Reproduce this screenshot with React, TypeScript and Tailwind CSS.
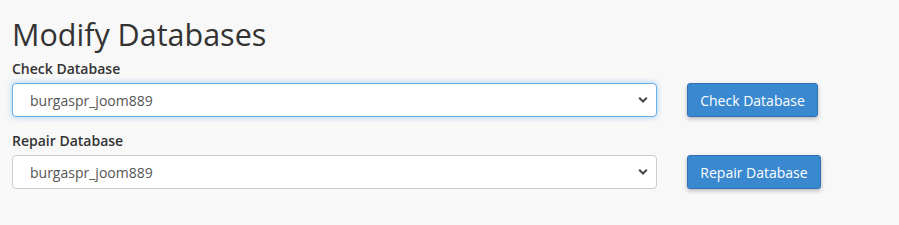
import React from 'react';

const font = { fontFamily: '"Open Sans", "Liberation Sans", sans-serif' };

const Chevron = () => (
    <svg className="pointer-events-none absolute right-[9px] top-1/2 -translate-y-1/2" width="10" height="7" viewBox="0 0 10 7">
        <path d="M1.2 1.3 L5 5 L8.8 1.3" fill="none" stroke="#444" strokeWidth="2" />
    </svg>
);

interface RowProps {
    label: string;
    action: string;
    focused?: boolean;
    btnWidth: string;
}

const DbRow: React.FC<RowProps> = ({ label, action, focused, btnWidth }) => (
    <div className="flex flex-col">
        <label className="text-[14px] leading-[20px] font-semibold text-[#333] mb-[4px]">{label}</label>
        <div className="flex items-center gap-[30px]">
            <div className="relative w-[645px] h-[34px]">
                <select
                    defaultValue="burgaspr_joom889"
                    className={`appearance-none w-full h-full rounded-[4px] bg-white pl-[17px] pr-8 text-[14px] text-[#555] outline-none border ${
                        focused
                            ? 'border-[#66afe9] shadow-[0_0_6px_rgba(102,175,233,0.6)]'
                            : 'border-[#ccc]'
                    }`}
                    style={font}
                >
                    <option>burgaspr_joom889</option>
                </select>
                <Chevron />
            </div>
            <button
                className={`h-[34px] ${btnWidth} rounded-[3px] bg-[#3a89d0] border border-[#2f73b5] text-white text-[14px] shadow-[0_2px_4px_rgba(0,0,0,0.25)]`}
                style={font}
            >
                {action}
            </button>
        </div>
    </div>
);

export default function App() {
    return (
        <div className="w-[899px] h-[225px] bg-[#f8f8f8] px-[12px] pt-[16px]" style={font}>
            <h1 className="text-[30.5px] leading-[36px] text-[#333] mb-[7px]">Modify Databases</h1>
            <div className="flex flex-col gap-[14px]">
                <DbRow label="Check Database" action="Check Database" focused btnWidth="w-[131px]" />
                <DbRow label="Repair Database" action="Repair Database" btnWidth="w-[134px]" />
            </div>
        </div>
    );
}
